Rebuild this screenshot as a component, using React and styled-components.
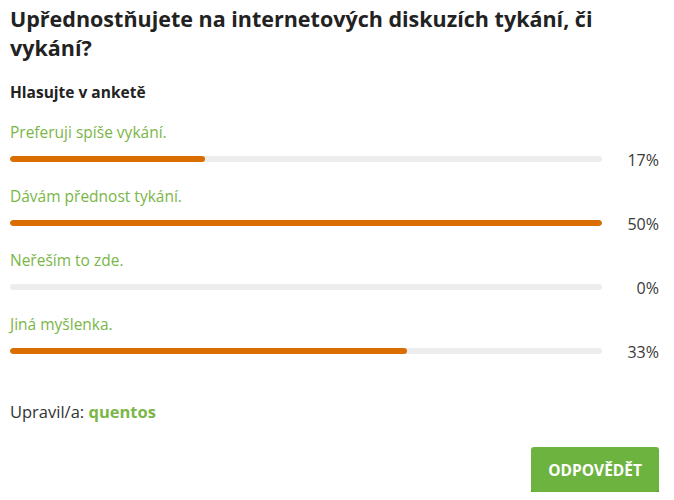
import styled, { createGlobalStyle } from 'styled-components'

const GlobalStyle = createGlobalStyle`
  body {
    margin: 0;
    background: #fff;
    font-family: "Open Sans", "Liberation Sans", sans-serif;
    color: #2a2a2a;
  }
`

const Poll = styled.div`
  padding: 4px 15px 0 10px;
`

const Title = styled.h2`
  margin: 0;
  font-size: 21.5px;
  line-height: 29px;
  font-weight: 700;
  color: #222;
`

const Subtitle = styled.h3`
  margin: 20px 0 0;
  font-size: 15.5px;
  line-height: 20px;
  font-weight: 700;
  color: #222;
`

const Options = styled.div`
  margin-top: 19px;
  display: flex;
  flex-direction: column;
  gap: 16.5px;
`

const Option = styled.div`
  display: flex;
  flex-direction: column;
`

const Label = styled.a`
  font-size: 15.5px;
  line-height: 22px;
  color: #7ab648;
  text-decoration: none;
`

const BarRow = styled.div`
  display: flex;
  align-items: center;
  margin-top: 5.5px;
  height: 20px;
`

const Track = styled.div`
  flex: 1;
  height: 6px;
  border-radius: 3px;
  background: #ededed;
  overflow: hidden;
  margin-right: 21px;
`

const Fill = styled.div`
  height: 100%;
  border-radius: 3px;
  background: #d96d00;
`

const Percent = styled.span`
  font-size: 16px;
  line-height: 16px;
  padding-top: 3px;
  color: #3a3a3a;
  width: 36px;
  text-align: right;
`

const Editor = styled.p`
  margin: 40.5px 0 0;
  font-size: 16.5px;
  line-height: 22px;
  color: #333;
`

const User = styled.a`
  color: #7ab648;
  font-weight: 700;
  text-decoration: none;
`

const Actions = styled.div`
  display: flex;
  justify-content: flex-end;
  margin-top: 24px;
`

const Button = styled.button`
  font-family: inherit;
  background: #6db33f;
  color: #fff;
  border: none;
  border-radius: 3px;
  box-shadow: 0 2px 0 #4f8a2a;
  padding: 0 17px;
  height: 45px;
  font-size: 15.5px;
  font-weight: 700;
  cursor: pointer;
`

const answers = [
  { label: 'Preferuji spíše vykání.', value: 17, width: 33 },
  { label: 'Dávám přednost tykání.', value: 50, width: 100 },
  { label: 'Neřeším to zde.', value: 0, width: 0 },
  { label: 'Jiná myšlenka.', value: 33, width: 67 },
]

const App = () => {
  return (
    <>
      <GlobalStyle />
      <Poll>
        <Title>Upřednostňujete na internetových diskuzích tykání, či vykání?</Title>
        <Subtitle>Hlasujte v anketě</Subtitle>
        <Options>
          {answers.map((a) => (
            <Option key={a.label}>
              <Label href="#">{a.label}</Label>
              <BarRow>
                <Track>
                  <Fill style={{ width: `${a.width}%` }} />
                </Track>
                <Percent>{a.value}%</Percent>
              </BarRow>
            </Option>
          ))}
        </Options>
        <Editor>
          Upravil/a: <User href="#">quentos</User>
        </Editor>
        <Actions>
          <Button>ODPOVĚDĚT</Button>
        </Actions>
      </Poll>
    </>
  )
}

export default App
